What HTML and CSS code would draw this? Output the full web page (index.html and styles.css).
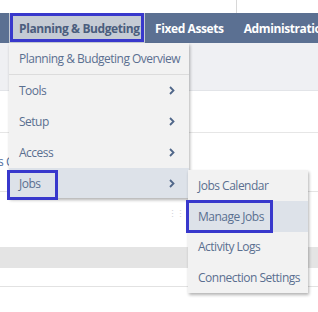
FILE: index.html
```html
<!DOCTYPE html>
<html>
<head>
<meta charset="utf-8">
<link rel="stylesheet" href="styles.css">
</head>
<body>
<div class="page">
  <div class="topstrip"><div class="topline"></div></div>
  <nav class="nav">
    <div class="tab active">Planning &amp; Budgeting</div>
    <div class="tab">Fixed Assets</div>
    <div class="tab">Administration</div>
  </nav>
  <div class="content">
    <div class="band band1"></div>
    <div class="band band2"></div>
    <div class="band band3"><span class="peek">s C</span></div>
    <div class="band band4"><span class="dots">⋮⋮⋮</span></div>
    <div class="band band5"></div>
    <div class="band band6"></div>
  </div>

  <div class="menu">
    <div class="item first">Planning &amp; Budgeting Overview</div>
    <div class="item">Tools<svg class="chev" viewBox="0 0 6 9"><path d="M1 1l3.5 3.5L1 8" fill="none" stroke="#4f6689" stroke-width="1.8"/></svg></div>
    <div class="item">Setup<svg class="chev" viewBox="0 0 6 9"><path d="M1 1l3.5 3.5L1 8" fill="none" stroke="#4f6689" stroke-width="1.8"/></svg></div>
    <div class="item">Access<svg class="chev" viewBox="0 0 6 9"><path d="M1 1l3.5 3.5L1 8" fill="none" stroke="#4f6689" stroke-width="1.8"/></svg></div>
    <div class="item hl">Jobs<svg class="chev" viewBox="0 0 6 9"><path d="M1 1l3.5 3.5L1 8" fill="none" stroke="#4f6689" stroke-width="1.8"/></svg></div>
  </div>

  <div class="submenu">
    <div class="item">Jobs Calendar</div>
    <div class="item hl">Manage Jobs</div>
    <div class="item">Activity Logs</div>
    <div class="item">Connection Settings</div>
  </div>

  <div class="mark mark-tab"></div>
  <div class="mark mark-jobs"></div>
  <div class="mark mark-manage"></div>
</div>
</body>
</html>
```

FILE: styles.css
```css
* { box-sizing: border-box; }
html, body { margin: 0; padding: 0; }
body {
  width: 318px;
  height: 312px;
  overflow: hidden;
  background: #fff;
  font-family: "Open Sans", "Noto Sans", sans-serif;
}
.page { position: relative; width: 318px; height: 312px; overflow: hidden; }

.topstrip { height: 13px; background: #fff; display: flex; }
.topline { width: 237px; border-right: 1px solid #d8d8d8; height: 13px; }

.nav {
  height: 30px;
  background: #5b7092;
  display: flex;
  align-items: stretch;
  padding-left: 9px;
  white-space: nowrap;
}
.tab {
  display: flex;
  align-items: center;
  padding: 0 10px;
  font-size: 12px;
  font-weight: 700;
  letter-spacing: -0.4px;
  color: #fff;
}
.tab.active {
  background: #c5cbd4;
  color: #4a5d7d;
  width: 136px;
}

.content { display: flex; flex-direction: column; }
.band { width: 100%; }
.band1 { height: 48px; background: #eff0f3; border-bottom: 1px solid #e2e4e8; }
.band2 { height: 42px; background: #fff; border-bottom: 1px solid #e6e6e6; }
.band3 { height: 59px; background: #fff; border-bottom: 1px solid #e4e4e4; padding-top: 22px; }
.band4 { height: 55px; background: #fff; padding: 8px 0 0 168px; }
.band5 { height: 21px; background: #e4e4e4; }
.band6 { height: 19px; background: #fff; border-bottom: 1px solid #e2e2e2; }
.peek { display: block; line-height: 14px; font-size: 12px; color: #4f6fa0; margin-left: -2px; letter-spacing: -0.4px; }
.dots { font-size: 9px; color: #cfd3d8; letter-spacing: -1px; }

.menu {
  position: absolute;
  left: 9px;
  top: 43px;
  width: 180px;
  background: #f2f2f2;
  box-shadow: 1px 2px 3px rgba(0,0,0,0.3);
}
.item {
  height: 31px;
  display: flex;
  align-items: center;
  justify-content: space-between;
  padding: 0 14px 0 10px;
  font-size: 12px;
  letter-spacing: -0.5px;
  color: #5a6f90;
  white-space: nowrap;
}
.menu .item.first { height: 32px; border-bottom: 1px solid #dcdcdc; }
.menu .item.hl { height: 30px; }
.item.hl { background: #dde2e9; }
.chev { width: 6px; height: 9px; }

.submenu {
  position: absolute;
  left: 188px;
  top: 170px;
  width: 120px;
  background: #f2f2f2;
  box-shadow: 1px 2px 3px rgba(0,0,0,0.3);
}
.submenu .item { height: 30.8px; }

.mark { position: absolute; border: 3px solid #3838cc; }
.mark-tab { left: 10px; top: 13px; width: 134px; height: 29px; }
.mark-jobs { left: 7px; top: 170px; width: 51px; height: 30px; }
.mark-manage { left: 186px; top: 200px; width: 87px; height: 33px; }
```
